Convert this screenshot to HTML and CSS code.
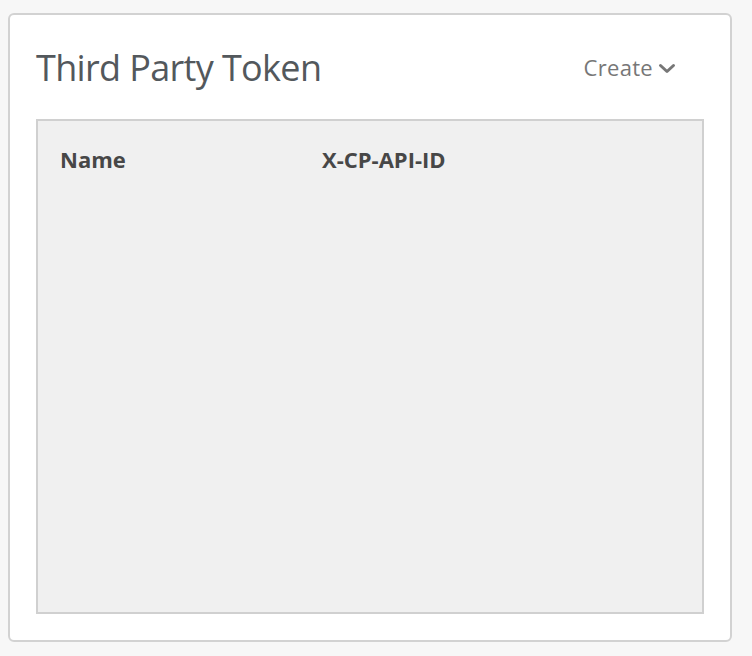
FILE: index.html
```html
<!DOCTYPE html>
<html>
<head>
<meta charset="utf-8">
<link rel="stylesheet" href="styles.css">
</head>
<body>
<div class="card">
  <div class="card-header">
    <h1 class="title">Third Party Token</h1>
    <button class="create">Create
      <svg class="chev" width="18" height="11" viewBox="0 0 18 11"><path d="M2.5 2.5 L9 8.5 L15.5 2.5" fill="none" stroke="#777" stroke-width="3" stroke-linecap="round" stroke-linejoin="round"/></svg>
    </button>
  </div>
  <div class="table-box">
    <div class="thead">
      <div class="th th-name">Name</div>
      <div class="th">X-CP-API-ID</div>
    </div>
  </div>
</div>
</body>
</html>
```
FILE: styles.css
```css
html, body {
  margin: 0;
  padding: 0;
  background: #f7f7f7;
  font-family: "Open Sans", "Liberation Sans", sans-serif;
}
body {
  padding: 13px 20px 14px 8px;
}
.card {
  box-sizing: border-box;
  width: 724px;
  height: 629px;
  background: #fff;
  border: 2px solid #d2d2d2;
  border-radius: 6px;
  padding: 0 26px 26px 26px;
  display: flex;
  flex-direction: column;
}
.card-header {
  display: flex;
  align-items: center;
  justify-content: space-between;
  height: 104px;
}
.title {
  margin: 0;
  font-weight: 400;
  font-size: 36px;
  color: #53585c;
  letter-spacing: -0.65px;
}
.create {
  background: none;
  border: 0;
  padding: 0;
  margin-right: 28px;
  font-family: inherit;
  font-size: 22px;
  letter-spacing: 0.3px;
  color: #777;
  display: flex;
  align-items: center;
  gap: 5px;
}
.chev {
  margin-top: 2px;
}
.table-box {
  flex: 1;
  background: #f0f0f0;
  border: 2px solid #d0d0d0;
}
.thead {
  display: flex;
  padding: 23px 0 0 22px;
}
.th {
  font-weight: 700;
  font-size: 22px;
  color: #474747;
}
.th-name {
  width: 262px;
}
```
